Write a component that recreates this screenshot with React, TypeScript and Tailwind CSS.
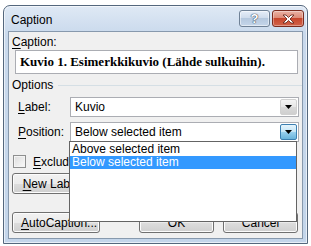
import { ReactNode } from "react";

const font = "font-['Liberation_Sans','Noto_Sans',sans-serif]";

function WinButton({ children, className = "" }: { children: ReactNode; className?: string }) {
  return (
    <div
      className={`flex h-[21px] items-center rounded-[3px] border border-[#707070] bg-[linear-gradient(#f2f2f2_0%,#ebebeb_50%,#dddddd_51%,#cfcfcf_100%)] px-[7px] text-[12px] leading-none text-black shadow-[inset_0_0_0_1px_#fcfcfc] ${className}`}
    >
      {children}
    </div>
  );
}

function DropArrow({ active }: { active?: boolean }) {
  return (
    <div
      className={`absolute right-[1px] top-[1px] bottom-[1px] flex w-[17px] items-center justify-center rounded-[2px] border ${
        active
          ? "border-[#3c7fb1] bg-[linear-gradient(#e5f4fc_0%,#c4e5f6_50%,#98d1ef_51%,#68b3db_100%)]"
          : "border-[#d0d0d0] bg-[linear-gradient(#f4f4f4_0%,#e6e6e6_50%,#d9d9d9_51%,#cfcfcf_100%)]"
      }`}
    >
      <svg width="7" height="4" viewBox="0 0 7 4">
        <path d="M0 0h7L3.5 4z" fill="#000" />
      </svg>
    </div>
  );
}

function Combo({ value, active }: { value: string; active?: boolean }) {
  return (
    <div className="relative flex h-[20px] w-[229px] items-center border border-[#abadb3] bg-white pl-[4px] text-[12px]">
      {value}
      <DropArrow active={active} />
    </div>
  );
}

export default function App() {
  return (
    <div className={`h-[246px] w-[311px] bg-white pl-[3px] pt-[5px] ${font} text-black`}>
      <div className="flex h-[239px] w-[305px] flex-col rounded-t-[7px] border border-[#54677d] bg-[linear-gradient(#dfe9f5_0%,#c9d9ec_12%,#c3d5ea_100%)] shadow-[inset_0_0_0_1px_rgba(255,255,255,0.6)]">
        {/* title bar */}
        <div className="flex h-[25px] shrink-0 items-center pl-[7px] pr-[3px]">
          <span className="pt-[3px] text-[12px]">Caption</span>
          <div className="ml-auto flex items-start gap-[2px] self-start pt-[4px]">
            <div className="flex h-[17px] w-[31px] items-center justify-center rounded-[3px] border border-[#6f8196] bg-[linear-gradient(#e6eef8_0%,#cfdcec_45%,#b5c8de_50%,#c5d6ea_100%)] shadow-[inset_0_0_0_1px_rgba(255,255,255,0.5)]">
              <span className="text-[13px] font-bold leading-none text-white [text-shadow:0_0_1px_#394b60,0_0_1px_#394b60,0_0_1px_#394b60]">
                ?
              </span>
            </div>
            <div className="flex h-[17px] w-[32px] items-center justify-center rounded-[3px] border border-[#7a2b1e] bg-[linear-gradient(#eab3a5_0%,#dd8b77_45%,#c7462c_50%,#d1634a_100%)] shadow-[inset_0_0_0_1px_rgba(255,255,255,0.35)]">
              <svg width="13" height="10" viewBox="0 0 13 10">
                <path
                  d="M1 1h3l2.5 2.5L9 1h3L8 5l4 4H9L6.5 6.5 4 9H1l4-4z"
                  fill="#fff"
                  stroke="#5a1d12"
                  strokeWidth="0.8"
                  strokeLinejoin="round"
                />
              </svg>
            </div>
          </div>
        </div>

        {/* frame + client */}
        <div className="flex-1 px-[4px] pb-[4px]">
          <div className="relative flex h-full flex-col border border-[#8799ad] bg-[#f0f0f0] text-[12px]">
            <div className="ml-[3px] mt-[3px] h-[15px] leading-[15px]">
              <u className="underline-offset-2">C</u>aption:
            </div>
            <div className="ml-[6px] flex h-[24px] w-[283px] items-center border border-[#abadb3] bg-white pl-[4px] font-['Liberation_Serif',serif] text-[13px] font-bold">
              Kuvio 1. Esimerkkikuvio (Lähde sulkuihin).
            </div>

            <div className="ml-[3px] mt-[4px] flex h-[15px] items-center gap-[5px] leading-[15px]">
              <span>Options</span>
              <div className="h-px w-[245px] border-t border-[#d5dfe5]" />
            </div>

            <div className="mt-[4px] flex items-center">
              <div className="w-[61px] pl-[9px]">
                <u className="underline-offset-2">L</u>abel:
              </div>
              <Combo value="Kuvio" />
            </div>
            <div className="mt-[5px] flex items-center">
              <div className="w-[61px] pl-[9px]">
                <u className="underline-offset-2">P</u>osition:
              </div>
              <Combo value="Below selected item" active />
            </div>

            <div className="ml-[4px] mt-[13px] flex h-[13px] items-center gap-[7px]">
              <div className="h-[13px] w-[13px] border border-[#8e8f8f] bg-[linear-gradient(135deg,#dcdcdc,#fafafa)] shadow-[inset_0_0_0_1px_#f4f4f4]" />
              <span>
                <u className="underline-offset-2">E</u>xclude label from caption
              </span>
            </div>

            <WinButton className="ml-[3px] mt-[5px] w-[88px] justify-center">
              <span>
                <u className="underline-offset-2">N</u>ew Label...
              </span>
            </WinButton>

            <div className="mt-[18px] flex">
              <WinButton className="ml-[3px] w-[88px] justify-start pl-[8px]">
                <span>
                  <u className="underline-offset-2">A</u>utoCaption...
                </span>
              </WinButton>
              <WinButton className="ml-[39px] w-[75px] justify-center">OK</WinButton>
              <WinButton className="ml-[9px] w-[75px] justify-center">Cancel</WinButton>
            </div>

            {/* open dropdown list */}
            <div className="absolute left-[60px] top-[109px] h-[81px] w-[228px] border border-[#646464] bg-white pt-[1px] text-[12px]">
              <div className="h-[13px] pl-[2px] leading-[13px]">Above selected item</div>
              <div className="h-[13px] bg-[#3399ff] pl-[2px] leading-[13px] text-white">Below selected item</div>
            </div>
          </div>
        </div>
      </div>
    </div>
  );
}
